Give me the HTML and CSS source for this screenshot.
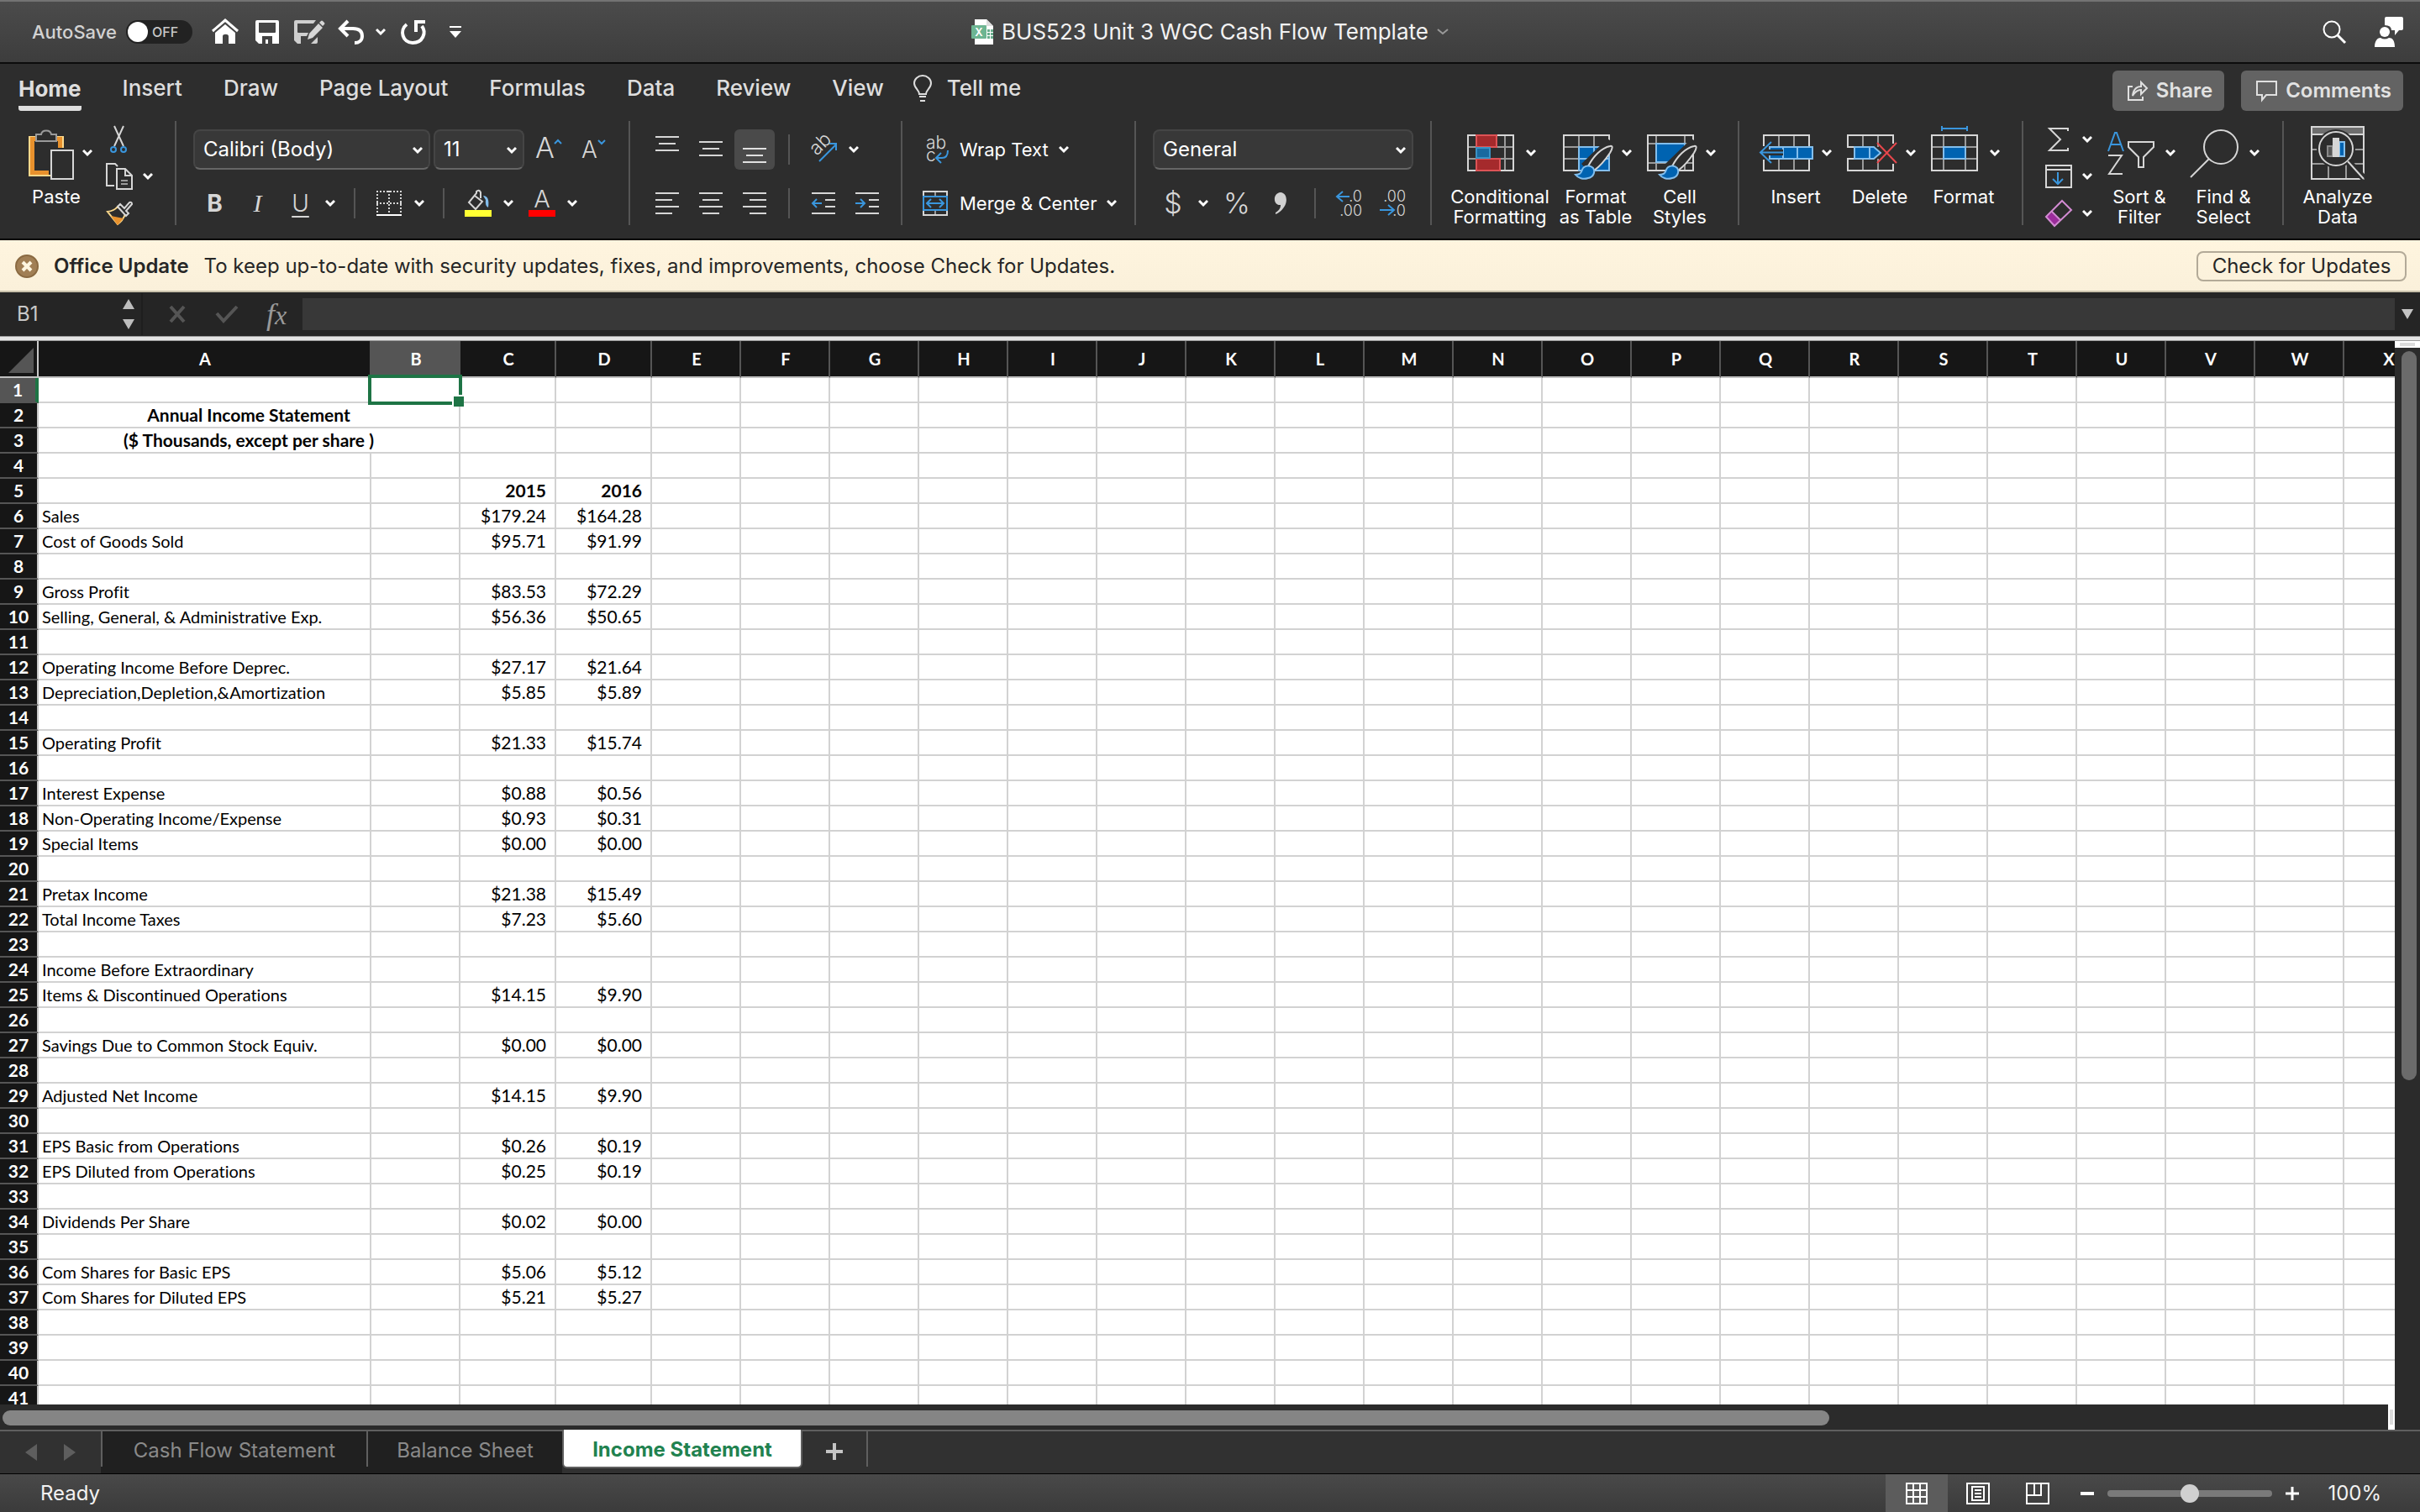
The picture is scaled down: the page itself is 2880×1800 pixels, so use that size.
FILE: index.html
```html
<!DOCTYPE html>
<html lang="en">
<head>
<meta charset="utf-8">
<title>BUS523 Unit 3 WGC Cash Flow Template</title>
<link rel="stylesheet" href="styles.css">
</head>
<body>
<svg class="defs" aria-hidden="true">
  <symbol id="chev" viewBox="0 0 12 10"><path d="M1 2l5 5 5-5" fill="none" stroke="currentColor" stroke-width="3"/></symbol>
  <symbol id="brush" viewBox="0 0 64 64">
    <path d="M26 45L57 15L64 20L48 42L36 56z" fill="#2d2d2d"/>
    <path d="M34 48C40 36 50 26 60 24C64 23 63 27 60 32C54 41 48 48 41 53" fill="#2d2d2d" stroke="#d6d6d6" stroke-width="2"/>
    <path d="M19 58C26 58 26 54 27 52C29 47 36 46 40 50C43 55 40 61 34 62C28 64 22 62 19 58z" fill="#0063b1" stroke="#83beec" stroke-width="2"/>
  </symbol>
</svg>

<header class="titlebar">
  <div class="quick">
    <label class="autosave" for="autosave">AutoSave</label>
    <span class="toggle"><input type="checkbox" id="autosave"><span class="knob"></span><span class="state">OFF</span></span>
    <button class="qbtn q-home" aria-label="Home"><svg width="32" height="32" viewBox="0 0 32 32"><path d="M1 15L16 2l15 13" fill="none" stroke="#fff" stroke-width="3"/><path d="M4 17L16 7l12 10v13h-8v-9c0-3-7-3-7 0v9H4z" fill="#fff"/></svg></button>
    <button class="qbtn q-save" aria-label="Save"><svg width="28" height="28" viewBox="0 0 28 28"><path d="M0 2q0-2 2-2h24q2 0 2 2v26H4l-4-4zM4 3v11q0 1 1 1h18q1 0 1-1V3zM8 19v9h4v-5h3v5h5v-9z" fill="#fff" fill-rule="evenodd"/></svg></button>
    <button class="qbtn q-edit" aria-label="Save as"><svg width="36" height="28" viewBox="0 0 36 28"><path d="M0 2q0-2 2-2h24l-3 4H4v10q0 1 1 1h12l-2 4H8v9h12l8-8v6q0 2-2 2H4l-4-4z" fill="#cfcfcf"/><path d="M16 23l2-7L29 4l5 5-12 12zM30 3l2-2q1-1 2 0l2 2q1 1 0 2l-2 2z" fill="#d6d6d6"/></svg></button>
    <button class="qbtn q-undo" aria-label="Undo"><svg width="30" height="28" viewBox="0 0 30 28"><path d="M11 1L2 10l9 9M2 10h15c7 0 11 3 11 9 0 5-4 8-9 8" fill="none" stroke="#fff" stroke-width="4"/></svg></button>
    <button class="qbtn q-more" aria-label="Undo list"><svg width="12" height="10"><use href="#chev"/></svg></button>
    <button class="qbtn q-redo" aria-label="Repeat"><svg width="30" height="30" viewBox="0 0 30 30"><path d="M7 6C-2 13 2 28 14 28c12 0 17-12 11-20M18 15V3h11" fill="none" stroke="#fff" stroke-width="4"/></svg></button>
    <button class="qbtn q-cust" aria-label="Customize"><svg width="16" height="16" viewBox="0 0 16 16"><path d="M1 1h14v2H1zM1 7h14l-7 8z" fill="#fff"/></svg></button>
  </div>
  <h1 class="doc">
    <svg width="26" height="30" viewBox="0 0 26 30"><path d="M4 0h14l8 8v22H4z" fill="#fff"/><path d="M18 0v8h8z" fill="#ddd"/><path d="M19 12h3v3h-3zM23 12h3v3h-3zM19 16h3v3h-3zM23 16h3v3h-3zM19 20h3v3h-3zM23 20h3v3h-3z" fill="#69ae8d"/><rect y="7" width="18" height="16" rx="1" fill="#6db592"/><text x="9" y="20" text-anchor="middle" font-family="Inter" font-weight="600" font-size="13" fill="#fff">X</text></svg>
    <span>BUS523 Unit 3 WGC Cash Flow Template</span>
    <svg class="dim" width="14" height="10" viewBox="0 0 14 10"><path d="M1 2l6 5 6-5" fill="none" stroke="currentColor" stroke-width="2"/></svg>
  </h1>
  <div class="account">
    <button class="qbtn" aria-label="Search"><svg width="28" height="28" viewBox="0 0 28 28"><circle cx="11" cy="11" r="9.500" fill="none" stroke="#fff" stroke-width="2"/><path d="M18 18l9 9" stroke="#fff" stroke-width="3"/></svg></button>
    <button class="qbtn" aria-label="Account"><svg width="34" height="36" viewBox="0 0 34 36"><path d="M12 2q0-2 2-2h18q2 0 2 2v12q0 2-2 2h-3l-5 6v-6h-4q0-6-8-6z" fill="#fff"/><circle cx="12" cy="18" r="6" fill="#fff"/><path d="M0 36c0-8 4-11 7-11q5 3 10 0c4 0 7 3 7 11z" fill="#fff"/></svg></button>
  </div>
</header>

<nav class="tabs">
  <a href="#home" class="tab active">Home</a>
  <a href="#insert" class="tab">Insert</a>
  <a href="#draw" class="tab">Draw</a>
  <a href="#layout" class="tab">Page Layout</a>
  <a href="#formulas" class="tab">Formulas</a>
  <a href="#data" class="tab">Data</a>
  <a href="#review" class="tab">Review</a>
  <a href="#view" class="tab">View</a>
  <a href="#tell" class="tab tell"><svg width="22" height="32" viewBox="0 0 22 32"><path d="M7 23c0-5-6-7-6-13a10 9 0 0 1 20 0c0 6-6 8-6 13zM7 26h8M8 31h6" fill="none" stroke="#dedede" stroke-width="2"/></svg>Tell me</a>
  <div class="tab-actions">
    <button class="action"><svg width="24" height="24" viewBox="0 0 24 24"><path d="M6 7H1v16h17v-4" fill="none" stroke="#e0e0e0" stroke-width="2"/><path d="M6 18C7 10 11 7 16 7V2l7 7-7 7v-5c-4 0-7 2-10 7z" fill="none" stroke="#e0e0e0" stroke-width="2"/></svg>Share</button>
    <button class="action"><svg width="25" height="24" viewBox="0 0 25 24"><path d="M1 1h23v16H12l-5 6v-6H1z" fill="none" stroke="#e0e0e0" stroke-width="2"/></svg>Comments</button>
  </div>
</nav>

<section class="ribbon" aria-label="Home ribbon">
  <div class="group g-clip">
    <button class="big"><span class="ico"><svg width="64" height="64" viewBox="0 0 64 64"><path d="M20 13h-9v46h25M42 13h9v13" fill="none" stroke="#fcd98b" stroke-width="2"/><path d="M20 15.500h-5.500v40H34M42 15.500h5.500V26" fill="none" stroke="#e8912d" stroke-width="5"/><path d="M19 18V10h6c1-6 11-6 12 0h6v8z" fill="#2d2d2d" stroke="#9a9a9a" stroke-width="2"/><rect x="37" y="29" width="26" height="34" fill="#2d2d2d" stroke="#d6d6d6" stroke-width="2"/></svg><svg class="ch" width="12" height="10"><use href="#chev"/></svg></span><span>Paste</span></button>
    <div class="minis">
      <button class="mini" aria-label="Cut"><svg width="32" height="32" viewBox="0 0 32 32"><path d="M10 0l11 24M21 0L10 24" stroke="#d6d6d6" stroke-width="2"/><g fill="none" stroke="#3a96dd" stroke-width="2"><circle cx="9" cy="28" r="3"/><circle cx="21" cy="28" r="3"/></g></svg></button>
      <button class="mini" aria-label="Copy"><svg width="32" height="32" viewBox="0 0 32 32"><path d="M10 27H1V1h10l3 3" fill="none" stroke="#d6d6d6" stroke-width="2"/><path d="M13 7h10l8 8v16H13zM23 7v8h8" fill="none" stroke="#d6d6d6" stroke-width="2"/><path d="M18 21h8M18 25h8" stroke="#9a9a9a" stroke-width="2"/></svg><svg width="12" height="10"><use href="#chev"/></svg></button>
      <button class="mini" aria-label="Format painter"><svg width="32" height="32" viewBox="0 0 32 32"><path d="M2 14q8-1 12-6l9 9q-3 8-9 12z" fill="none" stroke="#fcd98b" stroke-width="2"/><path d="M6 19l15 3-7 8z" fill="#e8912d"/><path d="M14 8l3-3 5 5 6-7q3-1 3 2l-7 8 3 3-3 3z" fill="#2d2d2d" stroke="#d6d6d6" stroke-width="2"/></svg></button>
    </div>
  </div>

  <div class="group g-font">
    <div class="row">
      <span class="pick p-font"><select aria-label="Font"><option>Calibri (Body)</option></select><svg width="12" height="10"><use href="#chev"/></svg></span>
      <span class="pick p-size"><select aria-label="Font size"><option>11</option></select><svg width="12" height="10"><use href="#chev"/></svg></span>
      <button class="tool grow" aria-label="Increase font size"><svg width="30" height="36" viewBox="0 0 30 36"><text x="-1" y="28" font-family="Inter" font-weight="300" font-size="34" fill="#d6d6d6">A</text><path d="M22 11l4-4 4 4" fill="none" stroke="#3a96dd" stroke-width="2"/></svg></button>
      <button class="tool shrink" aria-label="Decrease font size"><svg width="30" height="36" viewBox="0 0 30 36"><text x="-1" y="28" font-family="Inter" font-weight="300" font-size="28" fill="#d6d6d6">A</text><path d="M19 7l4 4 4-4" fill="none" stroke="#3a96dd" stroke-width="2"/></svg></button>
    </div>
    <div class="row">
      <button class="tool t51 bold">B</button>
      <button class="tool t51 italic">I</button>
      <button class="tool t51 under">U</button>
      <button class="drop d4" aria-label="Underline styles"><svg width="12" height="10"><use href="#chev"/></svg></button>
      <i class="sep s22"></i>
      <button class="tool t36" aria-label="Borders"><svg width="30" height="30" viewBox="0 0 30 30"><path d="M1 0v26M29 0v26M15 0v26M0 1h30M0 15h30" stroke="#d6d6d6" stroke-width="2" stroke-dasharray="2 2"/><path d="M0 29h30" stroke="#fff" stroke-width="2"/></svg></button>
      <button class="drop d12" aria-label="Border styles"><svg width="12" height="10"><use href="#chev"/></svg></button>
      <i class="sep s22"></i>
      <button class="tool t36" aria-label="Fill color"><svg width="32" height="32" viewBox="0 0 32 32"><path d="M12 7l9 7-8 9-8-8 9-11V2q3-3 5 1v7" fill="none" stroke="#d6d6d6" stroke-width="2"/><path d="M22 7q8 0 6 14-4-2-3-9z" fill="#83beec"/><rect y="24" width="32" height="8" fill="#ff3"/></svg></button>
      <button class="drop d12" aria-label="Fill colors"><svg width="12" height="10"><use href="#chev"/></svg></button>
      <button class="tool t36 m16" aria-label="Font color"><svg width="32" height="32" viewBox="0 0 32 32"><text x="16" y="21" text-anchor="middle" font-family="Inter" font-weight="300" font-size="29" fill="#d6d6d6">A</text><rect y="24" width="32" height="8" fill="#f00"/></svg></button>
      <button class="drop d12" aria-label="Font colors"><svg width="12" height="10"><use href="#chev"/></svg></button>
    </div>
  </div>

  <div class="group g-align">
    <div class="row">
      <button class="tool t52" aria-label="Top align"><svg width="28" height="32" viewBox="0 0 28 32"><path d="M0 1h28M4 9h20M0 17h28" stroke="#d6d6d6" stroke-width="2"/></svg></button>
      <button class="tool t52" aria-label="Middle align"><svg width="28" height="32" viewBox="0 0 28 32"><path d="M0 7h28M4 15h20M0 23h28" stroke="#d6d6d6" stroke-width="2"/></svg></button>
      <button class="tool t52" aria-label="Bottom align"><span class="on"><svg width="28" height="32" viewBox="0 0 28 32"><path d="M0 15h28M4 23h20M0 31h28" stroke="#e0e0e0" stroke-width="2"/></svg></span></button>
      <i class="sep s14"></i>
      <button class="tool t52" aria-label="Orientation"><svg width="32" height="32" viewBox="0 0 32 32"><text transform="translate(8 24) rotate(-45)" font-family="Inter" font-weight="300" font-size="23" fill="#d6d6d6">ab</text><path d="M11 30L31 10M23 9h8v8" fill="none" stroke="#3a96dd" stroke-width="2"/></svg></button>
      <button class="drop d4" aria-label="Orientation list"><svg width="12" height="10"><use href="#chev"/></svg></button>
    </div>
    <div class="row">
      <button class="tool t52" aria-label="Align left"><svg width="28" height="26" viewBox="0 0 28 26"><path d="M0 1h28M0 9h20M0 17h28M0 25h20" stroke="#d6d6d6" stroke-width="2"/></svg></button>
      <button class="tool t52" aria-label="Center"><svg width="28" height="26" viewBox="0 0 28 26"><path d="M0 1h28M4 9h20M0 17h28M4 25h20" stroke="#d6d6d6" stroke-width="2"/></svg></button>
      <button class="tool t52" aria-label="Align right"><svg width="28" height="26" viewBox="0 0 28 26"><path d="M0 1h28M8 9h20M0 17h28M8 25h20" stroke="#d6d6d6" stroke-width="2"/></svg></button>
      <i class="sep s14"></i>
      <button class="tool t52" aria-label="Decrease indent"><svg width="28" height="26" viewBox="0 0 28 26"><path d="M0 1h28M16 9h12M16 17h12M0 25h28" stroke="#d6d6d6" stroke-width="2"/><path d="M6 8l-5 5 5 5M1 13h11" fill="none" stroke="#3a96dd" stroke-width="2"/></svg></button>
      <button class="tool t52" aria-label="Increase indent"><svg width="28" height="26" viewBox="0 0 28 26"><path d="M0 1h28M16 9h12M16 17h12M0 25h28" stroke="#d6d6d6" stroke-width="2"/><path d="M6 8l5 5-5 5M0 13h11" fill="none" stroke="#3a96dd" stroke-width="2"/></svg></button>
    </div>
  </div>

  <div class="group g-wrap">
    <div class="row"><button class="wide"><svg width="32" height="34" viewBox="0 0 32 34"><g font-family="Inter" font-weight="300" font-size="21" fill="#d6d6d6"><text x="4" y="16">ab</text><text x="4" y="31">c</text></g><path d="M22 21l-6 6 6 6M16 27h7q7 0 7-9" fill="none" stroke="#3a96dd" stroke-width="2"/></svg>Wrap Text<svg class="ch" width="12" height="10"><use href="#chev"/></svg></button></div>
    <div class="row"><button class="wide"><svg width="32" height="30" viewBox="0 0 32 30"><path d="M1 7V1h28v6M1 23v6h28v-6" fill="none" stroke="#d6d6d6" stroke-width="2"/><path d="M15 2v5M15 23v5" stroke="#9a9a9a" stroke-width="2"/><path d="M1 7h28v16H1zM5 15h20M10 10l-5 5 5 5M20 10l5 5-5 5" fill="none" stroke="#3a96dd" stroke-width="2"/></svg>Merge &amp; Center<svg class="ch" width="12" height="10"><use href="#chev"/></svg></button></div>
  </div>

  <div class="group g-num">
    <div class="row"><span class="pick p-num"><select aria-label="Number format"><option>General</option></select><svg width="12" height="10"><use href="#chev"/></svg></span></div>
    <div class="row">
      <button class="tool t48 sym">$</button>
      <button class="drop d6" aria-label="Currency list"><svg width="12" height="10"><use href="#chev"/></svg></button>
      <button class="tool t52 m8 sym">%</button>
      <button class="tool t52" aria-label="Comma style"><svg width="16" height="26" viewBox="0 0 16 26"><path d="M8 0c10 1 10 19-6 26v-2c5-3 6-6 6-9C-1 16-2 1 8 0z" fill="#d0d0d0"/></svg></button>
      <i class="sep s14"></i>
      <button class="tool t52" aria-label="Increase decimal"><svg width="32" height="32" viewBox="0 0 32 32"><g font-family="Inter" font-weight="300" font-size="18" fill="#d6d6d6" text-anchor="end"><text x="31" y="14">.0</text><text x="31" y="31">.00</text></g><path d="M8 2l-7 6 7 6M1 8h15" fill="none" stroke="#3a96dd" stroke-width="2"/></svg></button>
      <button class="tool t52" aria-label="Decrease decimal"><svg width="32" height="32" viewBox="0 0 32 32"><g font-family="Inter" font-weight="300" font-size="18" fill="#d6d6d6" text-anchor="end"><text x="31" y="14">.00</text><text x="31" y="31">.0</text></g><path d="M10 18l7 6-7 6M0 24h16" fill="none" stroke="#3a96dd" stroke-width="2"/></svg></button>
    </div>
  </div>

  <div class="group g-styles">
    <button class="big cf"><span class="ico"><svg width="64" height="64" viewBox="0 0 64 64"><path d="M5 25h54M5 39h54M15 11v42M49 11v42" stroke="#9a9a9a" stroke-width="2"/><rect x="5" y="11" width="54" height="42" fill="none" stroke="#d6d6d6" stroke-width="2"/><path d="M15 11h24v14H15zM15 39h28v14H15z" fill="#a52a2c" stroke="#dd5356" stroke-width="2"/><rect x="15" y="26" width="16" height="12" fill="#1a699f" stroke="#3b92c5" stroke-width="2"/></svg><svg class="ch" width="12" height="10"><use href="#chev"/></svg></span><span>Conditional<br>Formatting</span></button>
    <button class="big"><span class="ico"><svg width="64" height="64" viewBox="0 0 64 64"><path d="M5 25h54M5 39h54M23 11v42M41 11v42" stroke="#9a9a9a" stroke-width="2"/><rect x="5" y="11" width="54" height="42" fill="none" stroke="#d6d6d6" stroke-width="2"/><path d="M23 25h36v28H23zM23 39h36M41 25v28" fill="#0063b1" stroke="#83beec" stroke-width="2"/><use href="#brush"/></svg><svg class="ch" width="12" height="10"><use href="#chev"/></svg></span><span>Format<br>as Table</span></button>
    <button class="big"><span class="ico"><svg width="64" height="64" viewBox="0 0 64 64"><path d="M5 21h54M5 44h54M15 11v42M49 11v42" stroke="#9a9a9a" stroke-width="2"/><rect x="5" y="11" width="54" height="42" fill="none" stroke="#d6d6d6" stroke-width="2"/><path d="M15 21h34v22H15z" fill="#0063b1" stroke="#83beec" stroke-width="2"/><use href="#brush"/></svg><svg class="ch" width="12" height="10"><use href="#chev"/></svg></span><span>Cell<br>Styles</span></button>
  </div>

  <div class="group g-cells">
    <button class="big"><span class="ico"><svg width="64" height="64" viewBox="0 0 64 64"><path d="M23 11v42M41 11v42" stroke="#9a9a9a" stroke-width="2"/><rect x="5" y="11" width="54" height="42" fill="none" stroke="#d6d6d6" stroke-width="2"/><path d="M4 24h8v16H4z" fill="#2d2d2d"/><path d="M12 25h51v14H12zM28 25v14M45 25v14" fill="#0063b1" stroke="#83beec" stroke-width="2"/><path d="M10 28h18v7H10z" fill="#2d2d2d"/><path d="M14 19L1 31.500 14 44M1 31.500h27" fill="none" stroke="#3a96dd" stroke-width="2"/></svg><svg class="ch" width="12" height="10"><use href="#chev"/></svg></span><span>Insert</span></button>
    <button class="big"><span class="ico"><svg width="64" height="64" viewBox="0 0 64 64"><path d="M23 11v14M41 11v14M23 39v14M41 39v14" stroke="#9a9a9a" stroke-width="2"/><path d="M13 25H5V11h54v10M13 39H5v14h54v-8" fill="none" stroke="#d6d6d6" stroke-width="2"/><path d="M13 25h23l8 7-8 7H13zM31 25v14" fill="#0063b1" stroke="#83beec" stroke-width="2"/><path d="M40 20l23 24M63 20L40 44" stroke="#e8474c" stroke-width="2"/></svg><svg class="ch" width="12" height="10"><use href="#chev"/></svg></span><span>Delete</span></button>
    <button class="big"><span class="ico"><svg width="64" height="64" viewBox="0 0 64 64"><path d="M5 25h54M5 39h54M19 11v42M45 11v42" stroke="#9a9a9a" stroke-width="2"/><rect x="5" y="11" width="54" height="42" fill="none" stroke="#d6d6d6" stroke-width="2"/><path d="M19 25h26v14H19z" fill="#0063b1" stroke="#83beec" stroke-width="2"/><path d="M17 0v6M47 0v6M17 3h30" stroke="#3a96dd" stroke-width="2"/></svg><svg class="ch" width="12" height="10"><use href="#chev"/></svg></span><span>Format</span></button>
  </div>

  <div class="group g-edit">
    <div class="minis">
      <button class="mini" aria-label="AutoSum"><svg width="32" height="32" viewBox="0 0 32 32"><path d="M27 6V3H5l13 13L5 29h22v-3" fill="none" stroke="#d6d6d6" stroke-width="2"/></svg><svg width="12" height="10"><use href="#chev"/></svg></button>
      <button class="mini" aria-label="Fill"><svg width="32" height="32" viewBox="0 0 32 32"><path d="M1 3h30v26H1zM1 8h30" fill="none" stroke="#d6d6d6" stroke-width="2"/><path d="M15 11v14M9 19l6 6 6-6" fill="none" stroke="#3a96dd" stroke-width="2"/></svg><svg width="12" height="10"><use href="#chev"/></svg></button>
      <button class="mini" aria-label="Clear"><svg width="32" height="32" viewBox="0 0 32 32"><path d="M8 15l9 9-6 7-10-11z" fill="#9b2c9b"/><path d="M20 1l11 11-20 19L1 20zM8 14l10 10" fill="none" stroke="#d38bd3" stroke-width="2"/></svg><svg width="12" height="10"><use href="#chev"/></svg></button>
    </div>
    <button class="big"><span class="ico"><svg width="64" height="64" viewBox="0 0 64 64"><path d="M6 30L14 8h2l8 22M9 22h12" fill="none" stroke="#3a96dd" stroke-width="2"/><path d="M6 35h16L7 57h16M30 19h30v6L48 37v12h-6V37L30 25z" fill="none" stroke="#d6d6d6" stroke-width="2"/></svg><svg class="ch" width="12" height="10"><use href="#chev"/></svg></span><span>Sort &amp;<br>Filter</span></button>
    <button class="big"><span class="ico"><svg width="64" height="64" viewBox="0 0 64 64"><circle cx="40" cy="25" r="20" fill="none" stroke="#d6d6d6" stroke-width="2"/><path d="M26 39L4 61" stroke="#d6d6d6" stroke-width="2"/></svg><svg class="ch" width="12" height="10"><use href="#chev"/></svg></span><span>Find &amp;<br>Select</span></button>
  </div>

  <div class="group g-ana">
    <button class="big"><span class="ico"><svg width="64" height="64" viewBox="0 0 64 64"><path d="M1 1h62v9H1z" fill="#6e6e6e"/><path d="M1 28h62M1 45h62M21 44v19M42 44v19" stroke="#9a9a9a" stroke-width="2"/><path d="M1 1h62v62H1zM1 10h62" fill="none" stroke="#d6d6d6" stroke-width="2"/><circle cx="30" cy="27" r="23" fill="#2d2d2d"/><circle cx="30" cy="27" r="20" fill="none" stroke="#d6d6d6" stroke-width="2"/><path d="M20 24h6v12h-6z" fill="#555" stroke="#8a8a8a" stroke-width="2"/><path d="M34 19h6v17h-6z" fill="#0063b1" stroke="#83beec" stroke-width="2"/><path d="M26 14h8v23h-8z" fill="#d6d6d6"/><path d="M44 42l20 21" stroke="#2d2d2d" stroke-width="8"/><path d="M44 42l19 21" stroke="#d6d6d6" stroke-width="2"/></svg></span><span>Analyze<br>Data</span></button>
  </div>
</section>

<aside class="banner">
  <button class="dismiss" aria-label="Dismiss"><svg width="28" height="28" viewBox="0 0 28 28"><circle cx="14" cy="14" r="13" fill="#a17f55" stroke="#8a6a42" stroke-width="2"/><path d="M9 9l10 10M19 9L9 19" stroke="#fff6e0" stroke-width="4"/></svg></button>
  <strong>Office Update</strong>
  <span>To keep up-to-date with security updates, fixes, and improvements, choose Check for Updates.</span>
  <button class="check">Check for Updates</button>
</aside>

<div class="formula">
  <div class="namebox"><input type="text" value="B1" aria-label="Name box"><svg width="14" height="36" viewBox="0 0 14 36"><path d="M7 0l7 12H0zM7 36L0 24h14z" fill="#bdbdbd"/></svg></div>
  <button class="fbtn" aria-label="Cancel"><svg width="20" height="20" viewBox="0 0 20 20"><path d="M2 1l16 18M18 1L2 19" stroke="#555" stroke-width="4"/></svg></button>
  <button class="fbtn f-ok" aria-label="Enter"><svg width="28" height="20" viewBox="0 0 28 20"><path d="M2 9l8 9L26 1" fill="none" stroke="#555" stroke-width="4"/></svg></button>
  <button class="fbtn fx"><span>f</span>x</button>
  <input class="entry" type="text" aria-label="Formula">
  <button class="fexp" aria-label="Expand formula bar"><svg width="14" height="12" viewBox="0 0 14 12"><path d="M0 0h14L7 12z" fill="#c4c4c4"/></svg></button>
</div>
<div class="splitter"></div>

<main class="sheet">
  <div class="grid">
    <table id="cells"><colgroup></colgroup><thead></thead><tbody></tbody></table>
  </div>
  <div class="vscroll"><div class="vsplit"></div><div class="vthumb"></div></div>
  <div class="hscroll"><div class="hthumb"></div><div class="hsplit"></div></div>
</main>

<nav class="sheets">
  <div class="arrows">
    <button aria-label="Previous sheet"><svg width="14" height="20" viewBox="0 0 14 20"><path d="M14 0v20L0 10z" fill="#5e5e5e"/></svg></button>
    <button aria-label="Next sheet"><svg width="14" height="20" viewBox="0 0 14 20"><path d="M0 0v20l14-10z" fill="#5e5e5e"/></svg></button>
  </div>
  <a href="#cash" class="stab s-cash"><span>Cash Flow Statement</span></a>
  <a href="#balance" class="stab s-bal"><span>Balance Sheet</span></a>
  <a href="#income" class="stab s-inc"><span>Income Statement</span></a>
  <button class="plus" aria-label="Add sheet"><svg width="20" height="20" viewBox="0 0 20 20"><path d="M10 0v20M0 10h20" stroke="#c4c4c4" stroke-width="4"/></svg></button>
</nav>

<footer class="status">
  <span class="ready">Ready</span>
  <button class="view on-view" aria-label="Normal view"><svg width="26" height="26" viewBox="0 0 26 26"><path d="M1 1h24v24H1zM9 1v24M17 1v24M1 9h24M1 17h24" fill="none" stroke="#fff" stroke-width="2"/></svg></button>
  <button class="view" aria-label="Page layout view"><svg width="28" height="26" viewBox="0 0 28 26"><path d="M1 1h26v24H1zM7 5h14v16H7zM10 9h8M10 13h8M10 17h8" fill="none" stroke="#fff" stroke-width="2"/></svg></button>
  <button class="view" aria-label="Page break view"><svg width="28" height="26" viewBox="0 0 28 26"><path d="M1 1h26v24H1zM1 15h17V1M10 1v14" fill="none" stroke="#fff" stroke-width="2"/></svg></button>
  <button class="zoom z-out" aria-label="Zoom out"><svg width="16" height="16" viewBox="0 0 16 16"><path d="M0 8h16" stroke="#fff" stroke-width="4"/></svg></button>
  <input class="slider" type="range" min="0" max="100" value="50" aria-label="Zoom">
  <button class="zoom z-in" aria-label="Zoom in"><svg width="16" height="16" viewBox="0 0 16 16"><path d="M8 0v16M0 8h16" stroke="#fff" stroke-width="3"/></svg></button>
  <span class="pct">100%</span>
</footer>
<script src="sheet.js"></script>
</body>
</html>
```
FILE: styles.css
```css
* { box-sizing: border-box; }
body {
  margin: 0;
  height: 100vh;
  display: flex;
  flex-direction: column;
  overflow: hidden;
  background: #2d2d2d;
  color: #fff;
  font: 24px/28px Inter, "Liberation Sans", sans-serif;
}
button, select, input { font: inherit; color: inherit; margin: 0; }
button { border: 0; padding: 0; background: none; }
a { color: inherit; text-decoration: none; }
svg { display: block; flex: none; overflow: visible; }
.defs { position: absolute; width: 0; height: 0; }

/* Title bar */
.titlebar {
  display: grid;
  grid-template-columns: 1fr auto 1fr;
  align-items: center;
  height: 76px;
  border-top: 2px solid #737373;
  border-bottom: 2px solid #0c0c0c;
  background: linear-gradient(#4b4b4b, #3d3d3d);
}
.quick { display: flex; align-items: center; padding-left: 38px; height: 72px; }
.autosave { width: 112px; font-size: 22px; font-weight: 500; color: #d2d2d2; }
.toggle {
  position: relative;
  display: flex;
  align-items: center;
  width: 79px;
  height: 28px;
  padding-left: 2px;
  border-radius: 14px;
  background: #222;
}
.toggle input { position: absolute; inset: 0; width: 100%; height: 100%; opacity: 0; }
.knob { width: 24px; height: 24px; border-radius: 50%; background: #fff; }
.state { padding-left: 5px; font-size: 16px; font-weight: 500; color: #c8c8c8; }
.q-home { margin-left: 23px; }
.q-save { margin-left: 20px; }
.q-edit { margin-left: 18px; }
.q-undo { margin-left: 17px; }
.q-more { margin-left: 14px; }
.q-redo { margin-left: 18px; }
.q-cust { margin-left: 27px; }
.doc { display: flex; align-items: center; gap: 10px; margin: 0; font-size: 26px; font-weight: 400; color: #f2f2f2; }
.dim { color: #999; }
.account { display: flex; align-items: center; justify-content: flex-end; gap: 34px; padding-right: 20px; }

/* Ribbon tabs */
.tabs { display: flex; align-items: flex-start; gap: 49px; height: 68px; padding: 8px 20px 0 22px; color: #dedede; }
.tab { display: flex; align-items: center; height: 42px; font-size: 26px; font-weight: 500; }
.tab.active { height: 48px; padding-top: 2px; border-bottom: 6px solid #dedede; border-radius: 3px; font-weight: 700; }
.tell { gap: 18px; margin-left: -14px; }
.tab-actions { display: flex; gap: 20px; margin-left: auto; }
.action {
  display: flex;
  align-items: center;
  gap: 10px;
  height: 48px;
  padding: 0 14px 0 18px;
  border-radius: 6px;
  background: #636363;
  font-weight: 600;
  color: #e2e2e2;
}

/* Ribbon */
.ribbon { display: flex; align-items: flex-start; height: 142px; border-bottom: 2px solid #000; }
.group { flex: none; height: 124px; border-right: 2px solid #555; }
.g-clip, .g-styles, .g-cells, .g-edit, .g-ana { display: flex; align-items: flex-start; }
.g-font, .g-align, .g-wrap, .g-num { padding-top: 10px; }
.g-clip { width: 210px; padding-left: 17px; }
.g-font { width: 540px; padding-left: 20px; }
.g-align { width: 324px; padding-left: 18px; }
.g-wrap { width: 278px; padding-left: 24px; }
.g-num { width: 352px; padding-left: 20px; }
.g-styles { width: 366px; padding-left: 17px; }
.g-cells { width: 338px; padding-left: 17px; }
.g-edit { width: 310px; padding-left: 26px; }
.g-ana { padding-left: 14px; border-right: 0; }

.big { width: 100px; padding-top: 6px; font-size: 22px; line-height: 24px; white-space: nowrap; }
.big.cf { width: 128px; }
.ico { display: flex; align-items: center; justify-content: center; gap: 10px; margin-bottom: 8px; }
.minis { width: 62px; }
.g-clip .minis { margin-left: 9px; }
.mini { display: flex; align-items: center; gap: 12px; height: 44px; }

.row { display: flex; align-items: center; height: 48px; margin-bottom: 16px; }
.tool { display: flex; align-items: center; justify-content: center; color: #d6d6d6; }
.drop { flex: none; }
.t52 { width: 52px; }
.t51 { width: 51px; }
.t48 { width: 48px; }
.t36 { width: 36px; }
.m8 { margin-left: 8px; }
.m16 { margin-left: 16px; }
.d4 { margin-left: 4px; }
.d6 { margin-left: 6px; }
.d12 { margin-left: 12px; }
.sep { width: 2px; height: 36px; background: #555; }
.s14 { margin: 0 14px; }
.s22 { margin: 0 22px; }
.grow { margin-left: 14px; }
.shrink { margin-left: 25px; }
.bold { font-size: 28px; font-weight: 700; }
.italic { font: italic 30px/32px "Liberation Serif", serif; }
.under { font-size: 28px; font-weight: 300; text-decoration: underline; text-decoration-thickness: 2px; text-underline-offset: 5px; }
.sym { font-size: 34px; font-weight: 300; }
.on { display: flex; align-items: center; justify-content: center; width: 48px; height: 48px; border-radius: 6px; background: #4a4a4a; }
.wide { display: flex; align-items: center; gap: 12px; font-size: 22px; }

.pick {
  position: relative;
  display: flex;
  height: 48px;
  border: 2px solid #454545;
  border-bottom-color: #666;
  border-radius: 8px;
  background: #383838;
}
.pick select { appearance: none; width: 100%; height: 100%; padding: 0 0 0 10px; border: 0; background: none; }
.pick svg { position: absolute; right: 7px; top: 18px; pointer-events: none; }
.p-font { width: 282px; margin-right: 4px; }
.p-size { width: 108px; }
.p-num { width: 310px; }

/* Update banner */
.banner {
  display: flex;
  align-items: center;
  height: 62px;
  padding: 2px 16px 0 18px;
  border-bottom: 2px solid #c9c2ac;
  background: linear-gradient(#fff5df, #faf0da);
  color: #262626;
}
.banner strong { margin: 0 18px; font-weight: 600; }
.check { width: 250px; height: 36px; margin-left: auto; border: 2px solid #b3aa98; border-radius: 8px; }

/* Formula bar */
.formula { display: flex; align-items: center; height: 52px; background: #252525; }
.namebox { display: flex; align-items: center; justify-content: space-between; width: 170px; height: 50px; padding-right: 8px; border-right: 2px solid #1e1e1e; }
.namebox input { width: 120px; padding: 0 0 0 20px; border: 0; background: none; color: #c8c8c8; }
.fbtn { margin-left: 31px; }
.f-ok { margin-left: 35px; }
.fx { width: 46px; margin-left: 22px; font: italic 32px/36px "Liberation Serif", serif; color: #999; }
.fx span { font-size: 36px; }
.entry { flex: 1; height: 38px; margin-left: 8px; padding: 0 8px; border: 0; background: #383838; }
.fexp { padding: 0 8px; }
.splitter { height: 6px; background: linear-gradient(#9a9a9a 0 1px, #e4e4e4 1px 5px, #9a9a9a 5px); }

/* Worksheet */
.sheet {
  flex: 1;
  min-height: 0;
  display: grid;
  grid-template-columns: minmax(0, 1fr) 30px;
  grid-template-rows: minmax(0, 1fr) 30px;
}
.grid { overflow: hidden; background: #fff; color: #000; }
#cells { table-layout: fixed; border-collapse: separate; border-spacing: 0; width: 2896px; font: 21px/28px Lato, sans-serif; }
.c-head { width: 46px; }
.c-a { width: 396px; }
.c-cd { width: 114px; }
.c-std { width: 106px; }
#cells th, #cells td { height: 30px; padding: 0; overflow: hidden; white-space: nowrap; border-right: 2px solid #d2d2d2; border-bottom: 2px solid #d2d2d2; }
#cells thead th { height: 44px; padding-left: 2px; background: #161616; color: #fff; font-size: 20px; border-right-color: #555; border-bottom-color: #c0c0c0; }
#cells tbody th { background: #161616; color: #fff; border-bottom-color: #555; border-right-color: #c8c8c8; }
#cells thead .corner { padding: 0 4px 4px 10px; border-right-color: #c8c8c8; vertical-align: bottom; }
#cells thead .picked { background: #555; border-right-color: #555; }
#cells tbody .picked { background: #555; border-right: 4px solid #1e7445; }
#cells .label { padding-left: 4px; font-size: 20px; text-align: left; font-variant-ligatures: none; }
#cells .num { padding-right: 10px; text-align: right; }
#cells .strong { font-weight: 700; }
#cells .title { font-weight: 700; text-align: center; }
#cells .cursor { position: relative; overflow: visible; }
.cursor::before { content: ""; position: absolute; inset: -4px; border: 4px solid #1e7445; }
.cursor::after { content: ""; position: absolute; right: -6px; bottom: -6px; width: 12px; height: 12px; border: solid #fff; border-width: 2px 0 0 2px; background: #1e7445; }

.vscroll { grid-row: 1 / 3; grid-column: 2; background: #2b2b2b; }
.vsplit { height: 8px; border: solid #fff; border-width: 2px 6px; background: #dcdcdc; }
.vthumb { width: 18px; height: 67%; margin: 4px 0 0 8px; border-radius: 9px; background: #6b6b6b; }
.hscroll { display: flex; align-items: center; background: #2b2b2b; }
.hthumb { width: calc(76% + 8px); height: 18px; margin: 2px 0 0 3px; border-radius: 9px; background: #858585; }
.hsplit { width: 8px; height: 30px; margin-left: auto; border: solid #fff; border-width: 6px 2px; background: #dcdcdc; }

/* Sheet tabs */
.sheets { display: flex; height: 52px; border-top: 2px solid #5f5f5f; background: #313131; color: #8a8a8a; }
.arrows { display: flex; align-items: center; gap: 32px; width: 120px; padding-left: 30px; }
.stab { height: 50px; background: #202020; }
.stab span { display: flex; align-items: center; justify-content: center; height: 42px; padding-top: 4px; border-left: 2px solid #5f5f5f; }
.s-cash { width: 316px; }
.s-bal { width: 233px; }
.s-inc { width: 286px; margin-top: -2px; background: none; color: #21824f; font-weight: 700; }
.s-inc span { height: 46px; border: 2px solid #5f5f5f; border-top: 0; border-radius: 0 0 6px 6px; background: #fff; }
.plus { display: flex; align-items: center; justify-content: center; width: 78px; height: 42px; padding-top: 6px; border-right: 2px solid #5f5f5f; }

/* Status bar */
.status { display: flex; align-items: center; height: 46px; border-top: 1px solid #000; background: linear-gradient(#494949, #3b3b3b); color: #f2f2f2; }
.ready { margin: 0 auto 0 48px; }
.view { display: flex; align-items: center; justify-content: center; width: 71px; height: 45px; }
.on-view { width: 74px; background: #5c5c5c; }
.z-out { margin-left: 16px; }
.slider { appearance: none; width: 196px; height: 8px; margin: 0 16px; border-radius: 4px; background: #7a7a7a; }
.slider::-webkit-slider-thumb { appearance: none; width: 22px; height: 22px; border-radius: 50%; background: #d0d0d0; }
.pct { margin: 0 46px 0 34px; }
```
FILE: sheet.js
```js
const COLUMNS = "ABCDEFGHIJKLMNOPQRSTUVWX".split("");
const ROW_COUNT = 41;

const rows = {
  2: { title: "Annual Income Statement" },
  3: { title: "($ Thousands, except per share )" },
  5: { head: true, values: ["2015", "2016"] },
  6: { label: "Sales", values: ["$179.24", "$164.28"] },
  7: { label: "Cost of Goods Sold", values: ["$95.71", "$91.99"] },
  9: { label: "Gross Profit", values: ["$83.53", "$72.29"] },
  10: { label: "Selling, General, & Administrative Exp.", values: ["$56.36", "$50.65"] },
  12: { label: "Operating Income Before Deprec.", values: ["$27.17", "$21.64"] },
  13: { label: "Depreciation,Depletion,&Amortization", values: ["$5.85", "$5.89"] },
  15: { label: "Operating Profit", values: ["$21.33", "$15.74"] },
  17: { label: "Interest Expense", values: ["$0.88", "$0.56"] },
  18: { label: "Non-Operating Income/Expense", values: ["$0.93", "$0.31"] },
  19: { label: "Special Items", values: ["$0.00", "$0.00"] },
  21: { label: "Pretax Income", values: ["$21.38", "$15.49"] },
  22: { label: "Total Income Taxes", values: ["$7.23", "$5.60"] },
  24: { label: "Income Before Extraordinary" },
  25: { label: "Items & Discontinued Operations", values: ["$14.15", "$9.90"] },
  27: { label: "Savings Due to Common Stock Equiv.", values: ["$0.00", "$0.00"] },
  29: { label: "Adjusted Net Income", values: ["$14.15", "$9.90"] },
  31: { label: "EPS Basic from Operations", values: ["$0.26", "$0.19"] },
  32: { label: "EPS Diluted from Operations", values: ["$0.25", "$0.19"] },
  34: { label: "Dividends Per Share", values: ["$0.02", "$0.00"] },
  36: { label: "Com Shares for Basic EPS", values: ["$5.06", "$5.12"] },
  37: { label: "Com Shares for Diluted EPS", values: ["$5.21", "$5.27"] },
};

function add(parent, tag, className, text) {
  const el = document.createElement(tag);
  if (className) el.className = className;
  if (text) el.textContent = text;
  parent.append(el);
  return el;
}

const table = document.getElementById("cells");
const group = table.querySelector("colgroup");
const headRow = add(table.tHead, "tr");

add(group, "col", "c-head");
add(headRow, "th", "corner").innerHTML =
  '<svg width="30" height="30" viewBox="0 0 30 30"><path d="M30 0v30H0z" fill="#555"/></svg>';
for (const name of COLUMNS) {
  add(group, "col", name === "A" ? "c-a" : name === "C" || name === "D" ? "c-cd" : "c-std");
  add(headRow, "th", name === "B" ? "picked" : "", name);
}

for (let r = 1; r <= ROW_COUNT; r++) {
  const tr = add(table.tBodies[0], "tr");
  const data = rows[r] || {};
  add(tr, "th", r === 1 ? "picked" : "", String(r));
  if (data.title) {
    add(tr, "td", "title", data.title).colSpan = 2;
  } else {
    add(tr, "td", "label", data.label);
    add(tr, "td", r === 1 ? "cursor" : "");
  }
  const values = data.values || ["", ""];
  for (const value of values) add(tr, "td", data.head ? "num strong" : "num", value);
  for (let c = 4; c < COLUMNS.length; c++) add(tr, "td");
}
```
